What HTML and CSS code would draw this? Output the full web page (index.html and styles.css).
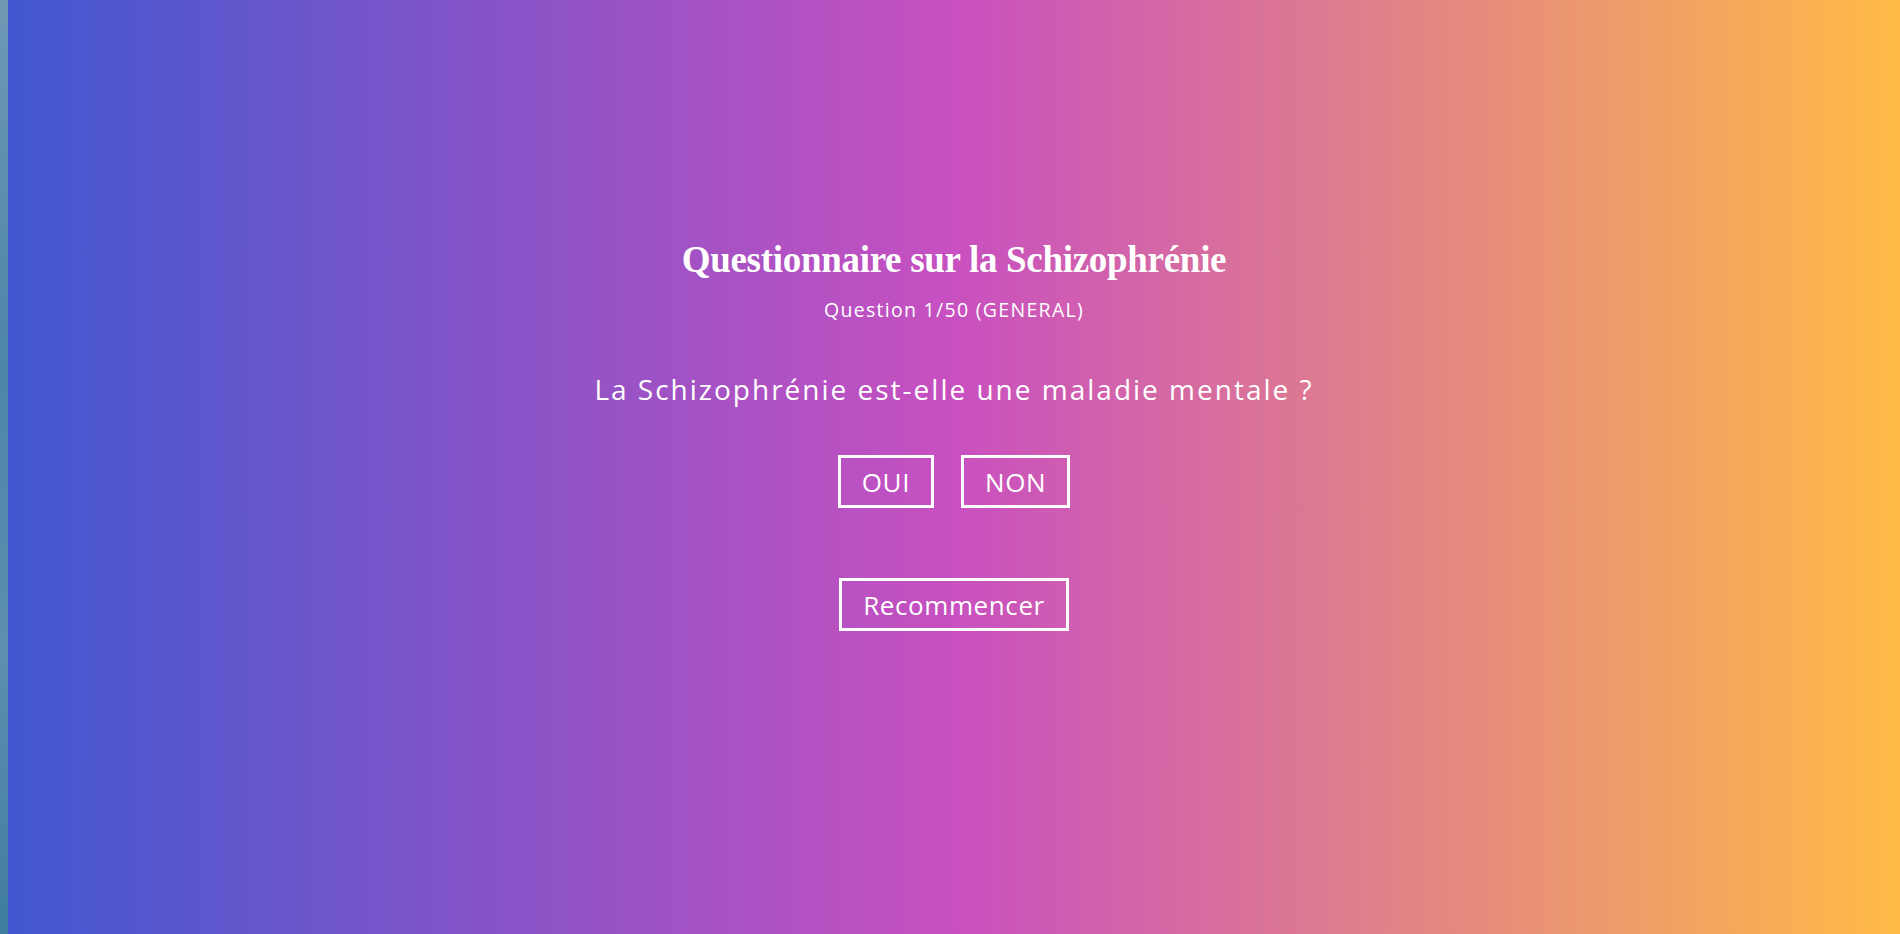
FILE: index.html
```html
<!DOCTYPE html>
<html lang="fr">
<head>
  <meta charset="UTF-8">
  <meta name="viewport" content="width=device-width, initial-scale=1.0">
  <title>Questionnaire sur la Schizophrénie</title>
  <link rel="stylesheet" href="styles.css">
</head>
<body>
  <div class="page">
    <div class="edge"></div>

    <main class="quiz">
      <h1>Questionnaire sur la Schizophrénie</h1>
      <p class="progress">Question 1/50 (GENERAL)</p>

      <p class="question">La Schizophrénie est-elle une maladie mentale ?</p>

      <div class="answers">
        <button class="btn">OUI</button>
        <button class="btn">NON</button>
      </div>

      <button class="btn restart">Recommencer</button>
    </main>
  </div>
</body>
</html>
```

FILE: styles.css
```css
body {
  margin: 0;
  font-family: 'Open Sans', sans-serif;
  color: #fff;
  overflow: hidden;
}

.page {
  display: flex;
  height: 100vh;
}

.edge {
  width: 8px;
  background: linear-gradient(180deg, #6f98b4, #4c85a8 40%, #5d8fb0 70%, #3f7ca0);
}

.quiz {
  flex: 1;
  display: flex;
  flex-direction: column;
  align-items: center;
  padding-top: 238px;
  background: linear-gradient(90deg, #4158d0 0%, #c850c0 50%, #ffbb46 100%);
}

.quiz h1 {
  margin: 0;
  font-family: 'Liberation Serif', serif;
  font-size: 37px;
  font-weight: bold;
  letter-spacing: -0.3px;
  line-height: 44px;
}

.progress {
  margin: 16px 0 0;
  font-size: 19.5px;
  font-weight: 500;
  line-height: 24px;
  letter-spacing: 1.3px;
}

.question {
  margin: 50px 0 0;
  font-size: 28px;
  font-weight: 500;
  line-height: 34px;
  letter-spacing: 2px;
}

.answers {
  display: flex;
  gap: 27px;
  margin-top: 49px;
}

.btn {
  height: 53px;
  padding: 0 21px;
  border: 3px solid #fff;
  background: transparent;
  color: #fff;
  font-family: 'Open Sans', sans-serif;
  font-size: 26px;
  font-weight: 500;
  letter-spacing: 0.6px;
  cursor: pointer;
}

.restart {
  margin-top: 70px;
}
```
